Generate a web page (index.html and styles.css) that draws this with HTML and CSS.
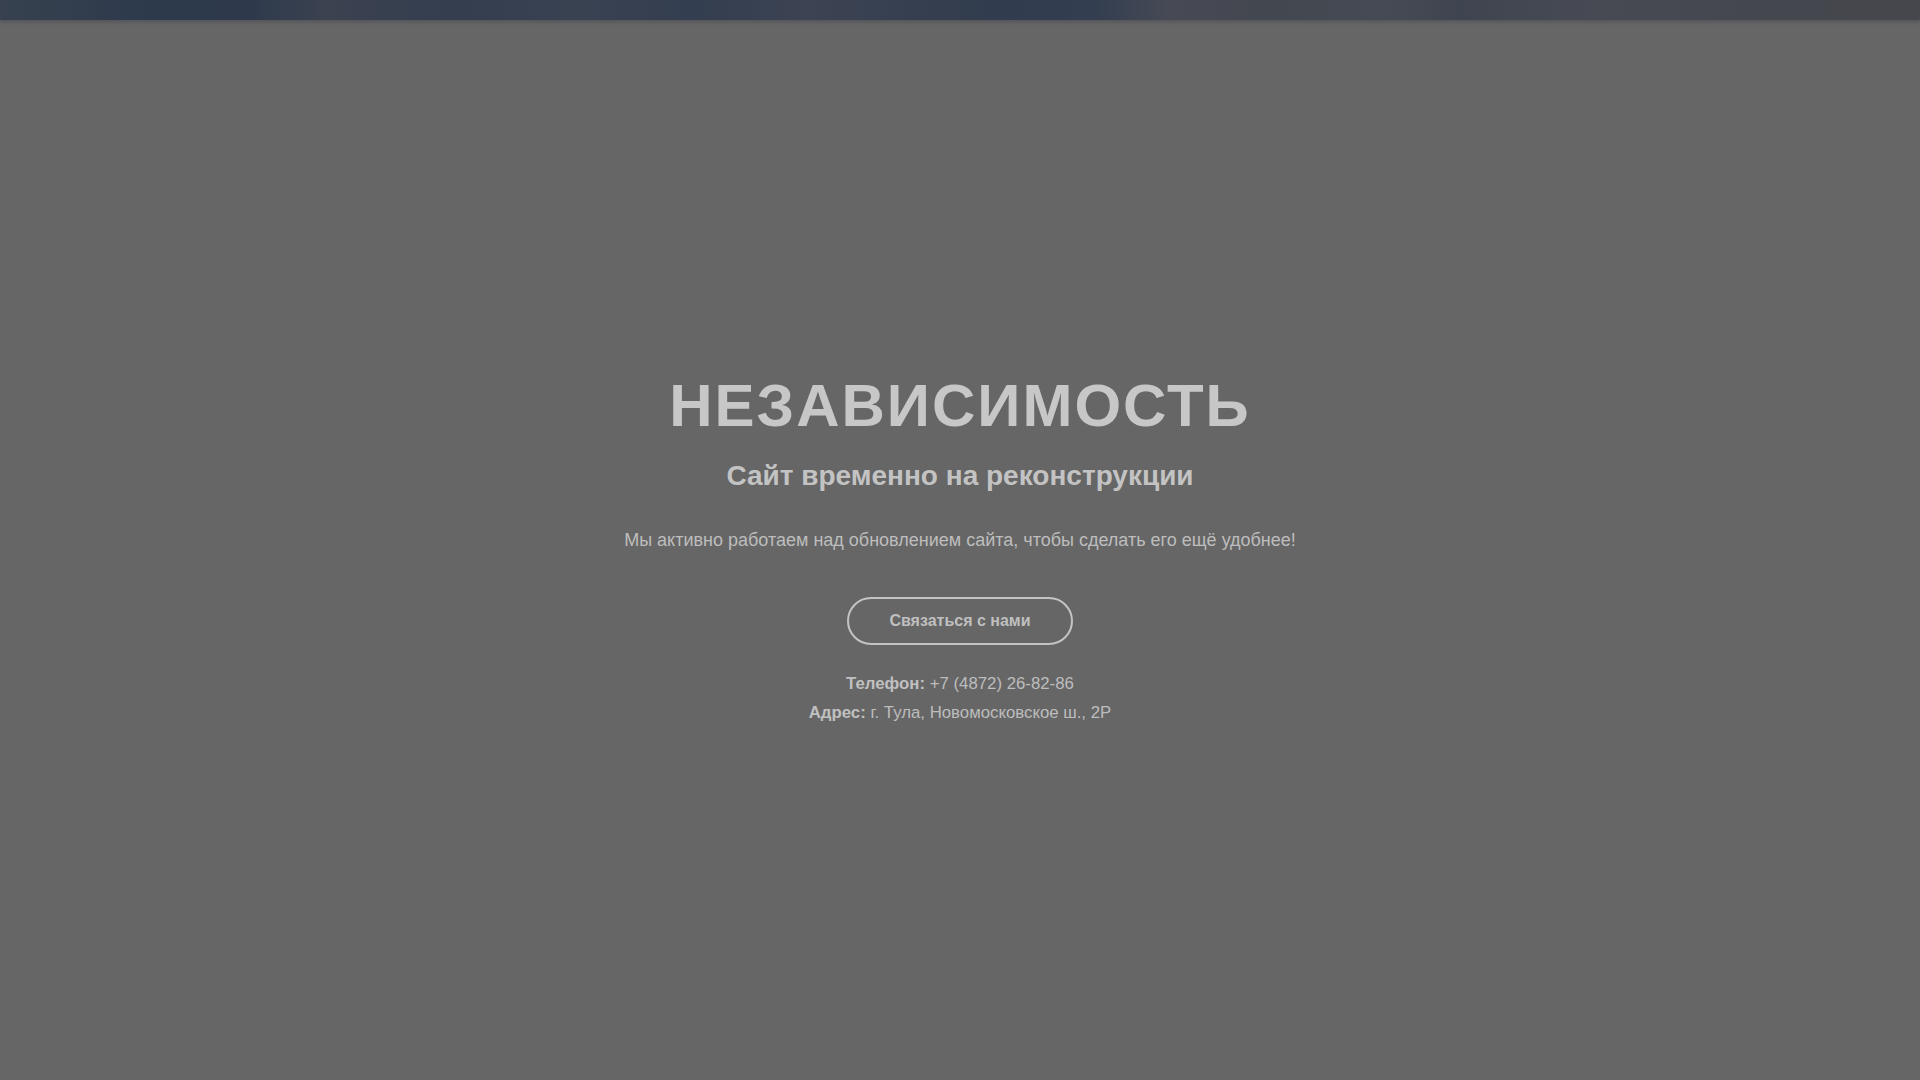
FILE: index.html
```html
<!DOCTYPE html>
<html lang="ru">
<head>
<meta charset="utf-8">
<title>НЕЗАВИСИМОСТЬ</title>
<link rel="stylesheet" href="styles.css">
</head>
<body>
<div class="header-blur"></div>
<main class="hero">
  <div class="content">
    <h1 class="title">НЕЗАВИСИМОСТЬ</h1>
    <h2 class="subtitle">Сайт временно на реконструкции</h2>
    <p class="lead">Мы активно работаем над обновлением сайта, чтобы сделать его ещё удобнее!</p>
    <div class="actions"><a class="btn" href="#">Связаться с нами</a></div>
    <div class="contacts">
      <p class="contact-line"><strong>Телефон:</strong> +7 (4872) 26-82-86</p>
      <p class="contact-line"><strong>Адрес:</strong> г. Тула, Новомосковское ш., 2Р</p>
    </div>
  </div>
</main>
</body>
</html>
```
FILE: styles.css
```css
html, body {
  margin: 0;
  padding: 0;
  height: 100%;
}
body {
  background: #666666;
  font-family: "Liberation Sans", Arial, sans-serif;
  display: flex;
  flex-direction: column;
  overflow: hidden;
}
.header-blur {
  height: 20px;
  flex: 0 0 20px;
  background: linear-gradient(90deg, #37414f 0%, #2d3a4c 8%, #2e3a4c 13%, #3b4250 17%, #343e4f 24%, #3a4252 30%, #333e50 36%, #3c4353 42%, #313c4e 52%, #333e50 57%, #474a55 61%, #43474f 66%, #464a54 72%, #3f4550 76%, #474a53 83%, #44474e 92%, #45474c 100%);
  box-shadow: 0 2px 3px rgba(70, 74, 84, 0.6);
}
.hero {
  flex: 1;
  display: flex;
  align-items: center;
  justify-content: center;
}
.content {
  text-align: center;
}
.title {
  margin: 0 0 20px;
  font-size: 60px;
  line-height: 1.1;
  font-weight: 700;
  letter-spacing: 2px;
  color: #c7c7c7;
}
.subtitle {
  margin: 0 0 34px;
  font-size: 28px;
  line-height: 1.2;
  font-weight: 700;
  color: #c3c3c3;
}
.lead {
  margin: 0 0 42px;
  font-size: 18px;
  line-height: 1.6;
  color: #bdbdbd;
}
.actions {
  margin: 0 0 24px;
}
.btn {
  display: inline-block;
  padding: 13px 40px;
  line-height: 18px;
  font-size: 16px;
  font-weight: 700;
  color: #bfbfbf;
  text-decoration: none;
  border: 2px solid #c4c4c4;
  border-radius: 30px;
}
.contacts {
  color: #bdbdbd;
  font-size: 16.8px;
}
.contact-line {
  margin: 0;
  line-height: 29px;
}
.contact-line strong {
  color: #c0c0c0;
}
```
